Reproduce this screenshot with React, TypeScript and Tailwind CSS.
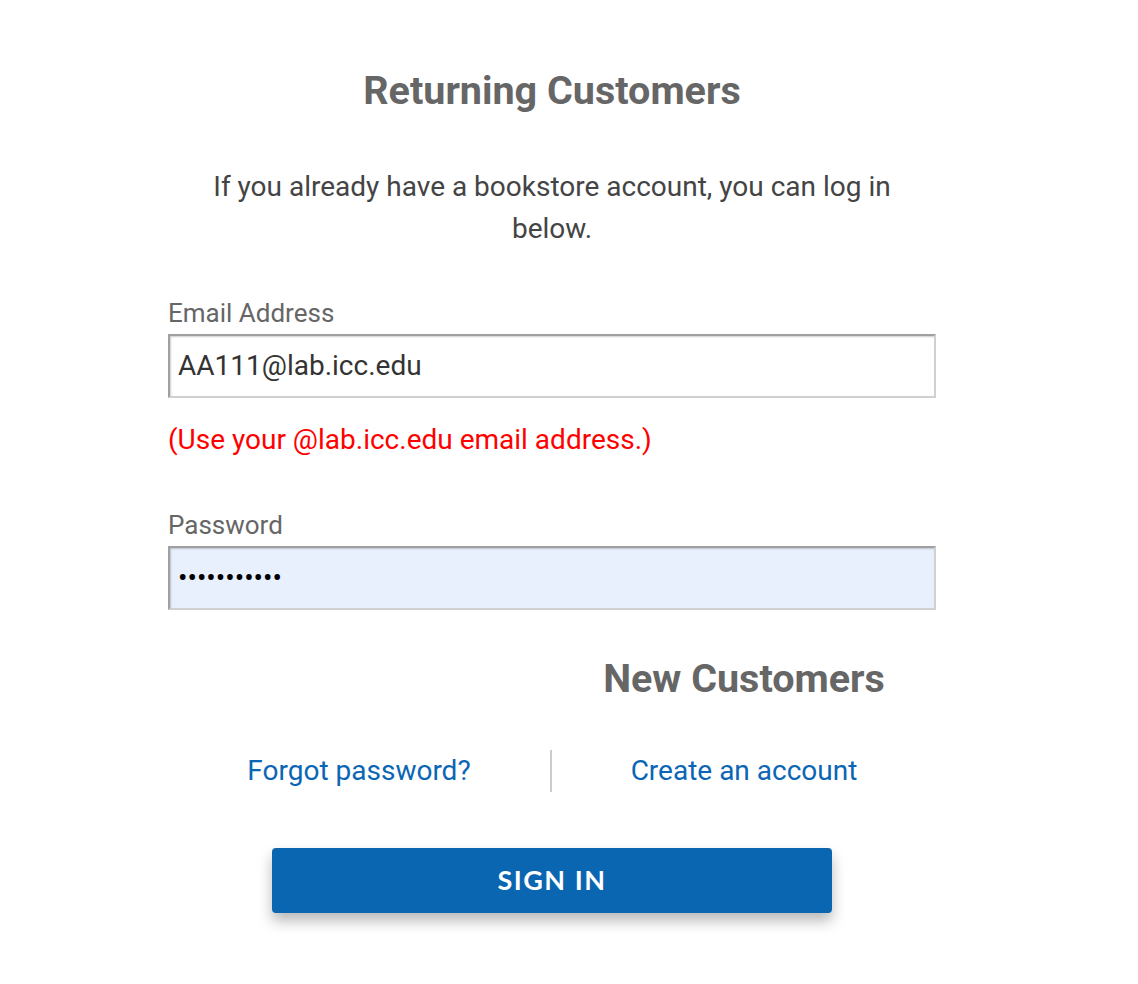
import React from "react";

export default function App() {
  return (
    <div className="w-[1138px] h-[984px] bg-white font-['Roboto',sans-serif]">
      <div className="w-[768px] ml-[168px] flex flex-col">
        <h1 className="mt-[66px] text-center text-[39.5px] leading-[50px] font-bold text-[#666666]">
          Returning Customers
        </h1>
        <p className="mt-[50px] mx-[40px] text-center text-[28px] leading-[42px] text-[#444444]">
          If you already have a bookstore account, you can log in below.
        </p>
        <label className="mt-[48px] text-[26px] leading-[30px] text-[#666666]">Email Address</label>
        <div className="mt-[6px] h-[64px] border-2 border-t-[#a0a0a0] border-l-[#a0a0a0] border-b-[#d0d0d0] border-r-[#d0d0d0] shadow-[inset_1px_1px_2px_rgba(0,0,0,0.2)] flex items-center px-[8px] text-[28px] text-[#333333] bg-white">
          AA111@lab.icc.edu
        </div>
        <p className="mt-[26px] text-[28px] leading-[32px] text-[#ff0000]">
          (Use your @lab.icc.edu email address.)
        </p>
        <label className="mt-[54px] text-[26px] leading-[30px] text-[#666666]">Password</label>
        <div className="mt-[6px] h-[64px] border-2 border-t-[#a0a0a0] border-l-[#a0a0a0] border-b-[#d0d0d0] border-r-[#d0d0d0] shadow-[inset_1px_1px_2px_rgba(0,0,0,0.2)] flex items-center px-[8px] text-[28px] text-black bg-[#e8f0fe]">
          •••••••••••
        </div>
        <div className="grid grid-cols-2 mt-[44px]">
          <div />
          <h2 className="text-center text-[39.5px] leading-[50px] font-bold text-[#666666]">New Customers</h2>
        </div>
        <div className="grid grid-cols-2 mt-[46px]">
          <div className="flex justify-center items-center h-[42px] border-r-2 border-[#cccccc]">
            <a className="text-[28px] text-[#0a66b4]">Forgot password?</a>
          </div>
          <div className="flex justify-center items-center h-[42px]">
            <a className="text-[28px] text-[#0a66b4]">Create an account</a>
          </div>
        </div>
        <div className="flex justify-center mt-[56px]">
          <button className="w-[560px] h-[65px] bg-[#0a66b0] rounded-[4px] shadow-[0_8px_14px_rgba(0,0,0,0.28)] text-white text-[27px] font-bold tracking-[1.5px] font-['Lato',sans-serif]">
            SIGN IN
          </button>
        </div>
      </div>
    </div>
  );
}
